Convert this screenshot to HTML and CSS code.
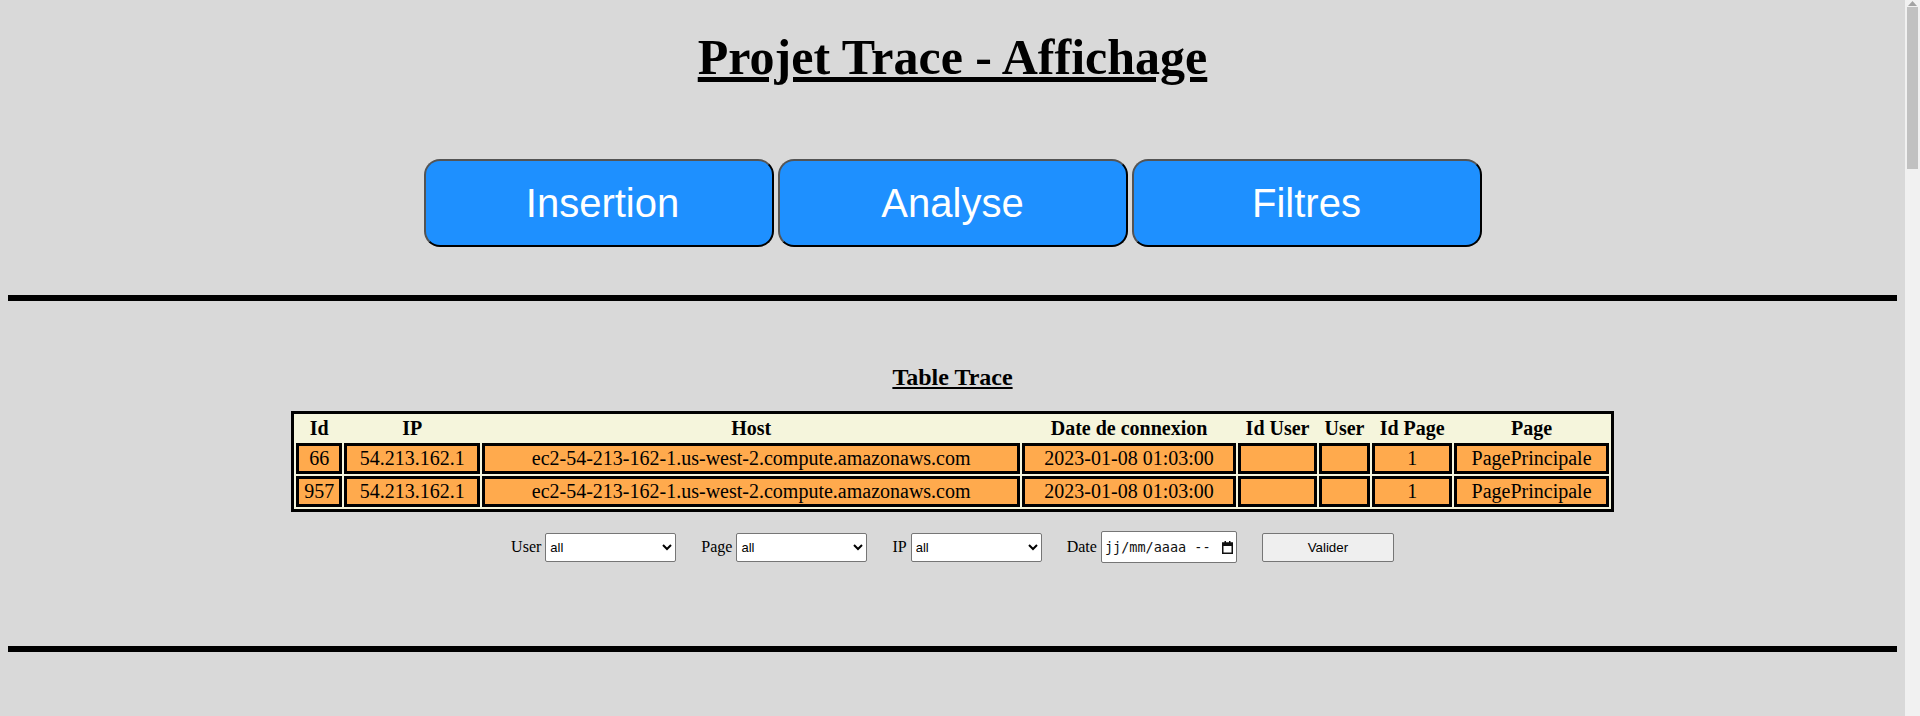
FILE: index.html
```html
<!DOCTYPE html>
<html lang="fr">
<head>
<meta charset="utf-8">
<title>Projet Trace - Affichage</title>
<link rel="stylesheet" href="styles.css">
</head>
<body>
<div class="page">
<h1 class="title">Projet Trace - Affichage</h1>
<nav class="menu">
  <button class="menu-btn menu-btn-first" type="button">Insertion</button>
  <button class="menu-btn" type="button">Analyse</button>
  <button class="menu-btn" type="button">Filtres</button>
</nav>
<hr class="sep">
<section class="trace">
  <h2 class="section-title">Table Trace</h2>
  <table class="trace-table">
    <thead>
      <tr><th>Id</th><th>IP</th><th>Host</th><th>Date de connexion</th><th>Id User</th><th>User</th><th>Id Page</th><th>Page</th></tr>
    </thead>
    <tbody>
      <tr><td>66</td><td>54.213.162.1</td><td>ec2-54-213-162-1.us-west-2.compute.amazonaws.com</td><td>2023-01-08 01:03:00</td><td></td><td></td><td>1</td><td>PagePrincipale</td></tr>
      <tr><td>957</td><td>54.213.162.1</td><td>ec2-54-213-162-1.us-west-2.compute.amazonaws.com</td><td>2023-01-08 01:03:00</td><td></td><td></td><td>1</td><td>PagePrincipale</td></tr>
    </tbody>
  </table>
  <form class="filters">
    <label class="field"><span class="field-label">User</span>
      <select class="field-select"><option>all</option></select>
    </label>
    <label class="field"><span class="field-label">Page</span>
      <select class="field-select"><option>all</option></select>
    </label>
    <label class="field"><span class="field-label">IP</span>
      <select class="field-select"><option>all</option></select>
    </label>
    <div class="field"><span class="field-label">Date</span>
      <div class="date-box"><span class="date-text">jj/mm/aaaa --</span>
        <svg class="date-icon" width="11" height="13" viewBox="0 0 11 13"><rect x="0.75" y="2.25" width="9.5" height="10" fill="none" stroke="#111" stroke-width="1.5"/><rect x="0" y="1.5" width="11" height="3.5" fill="#111"/><rect x="2.5" y="0" width="1.5" height="2" fill="#111"/><rect x="7" y="0" width="1.5" height="2" fill="#111"/></svg>
      </div>
    </div>
    <button class="submit-btn" type="button">Valider</button>
  </form>
</section>
<hr class="sep sep-bottom">
<div class="below"></div>
</div>
<div class="scrollbar" aria-hidden="true">
  <svg class="scroll-arrow" width="9" height="5" viewBox="0 0 9 5"><polygon points="4.5,0 9,5 0,5" fill="#a3a3a3"/></svg>
  <div class="scroll-thumb"></div>
</div>
</body>
</html>
```

FILE: styles.css
```css
html {
  overflow: hidden;
  background: #d9d9d9;
}
body {
  margin: 0;
  font-family: "Liberation Serif", "Times New Roman", serif;
  color: #000;
}
.page {
  padding: 8px 23px 8px 8px;
}
.title {
  margin: 22px 0 0;
  font-size: 50px;
  font-weight: bold;
  text-align: center;
  text-decoration: underline;
  line-height: 55px;
}
.menu {
  margin-top: 74px;
  display: flex;
  justify-content: center;
  gap: 4px;
}
.menu-btn {
  width: 350px;
  height: 88px;
  box-sizing: border-box;
  background: #1e90ff;
  color: #fff;
  font-family: "Liberation Sans", Arial, sans-serif;
  font-size: 40px;
  border: 2px solid;
  border-color: #545454 #000 #000 #545454;
  border-radius: 16px;
  padding: 0;
}
.menu-btn-first {
  padding-left: 8px;
}
.sep {
  margin: 48px 0 0;
  height: 0;
  border: 0;
  border-top: 3px solid #000;
  border-bottom: 3px solid #000;
}
.sep-bottom {
  margin-top: 83px;
}
.trace {
  margin-top: 63px;
}
.section-title {
  margin: 0;
  font-size: 24px;
  text-align: center;
  text-decoration: underline;
}
.trace-table {
  margin: 20px auto 0;
  width: 70%;
  background: #f5f5dc;
  border: 3px solid #000;
  border-spacing: 2px;
  font-size: 20px;
}
.trace-table th {
  padding: 1px;
  font-weight: bold;
}
.trace-table td {
  padding: 1px;
  border: 3px solid #000;
  background: #ffaa4d;
  text-align: center;
  height: 23px;
}
.filters {
  margin: 19px 0 0;
  display: flex;
  justify-content: center;
  align-items: center;
  gap: 25px;
}
.field {
  display: flex;
  align-items: center;
  gap: 4px;
  font-size: 16px;
}
.field-select {
  width: 131px;
  height: 29px;
  font-family: "Liberation Sans", Arial, sans-serif;
  font-size: 13px;
  background: #fff;
  border: 1px solid #767676;
  border-radius: 2px;
}
.date-box {
  width: 136px;
  height: 32px;
  box-sizing: border-box;
  background: #fff;
  border: 1px solid #767676;
  border-radius: 2px;
  display: flex;
  align-items: center;
  justify-content: space-between;
  padding: 0 3px 0 3px;
}
.date-text {
  font-family: "DejaVu Sans Mono", "Liberation Mono", monospace;
  font-size: 13.5px;
  color: #111;
  white-space: nowrap;
  overflow: hidden;
}
.date-icon {
  flex: none;
}
.submit-btn {
  width: 132px;
  height: 29px;
  box-sizing: border-box;
  background: #efefef;
  border: 1px solid #767676;
  border-radius: 2px;
  font-family: "Liberation Sans", Arial, sans-serif;
  font-size: 13.33px;
  color: #000;
}
.below {
  height: 2360px;
}
.scrollbar {
  position: fixed;
  top: 0;
  right: 0;
  width: 15px;
  height: 100vh;
  background: #f1f1f1;
  display: flex;
  flex-direction: column;
  align-items: center;
}
.scroll-arrow {
  margin-top: 1px;
  display: block;
}
.scroll-thumb {
  margin-top: 1px;
  width: 11px;
  height: 162px;
  background: #c1c1c1;
}
```
